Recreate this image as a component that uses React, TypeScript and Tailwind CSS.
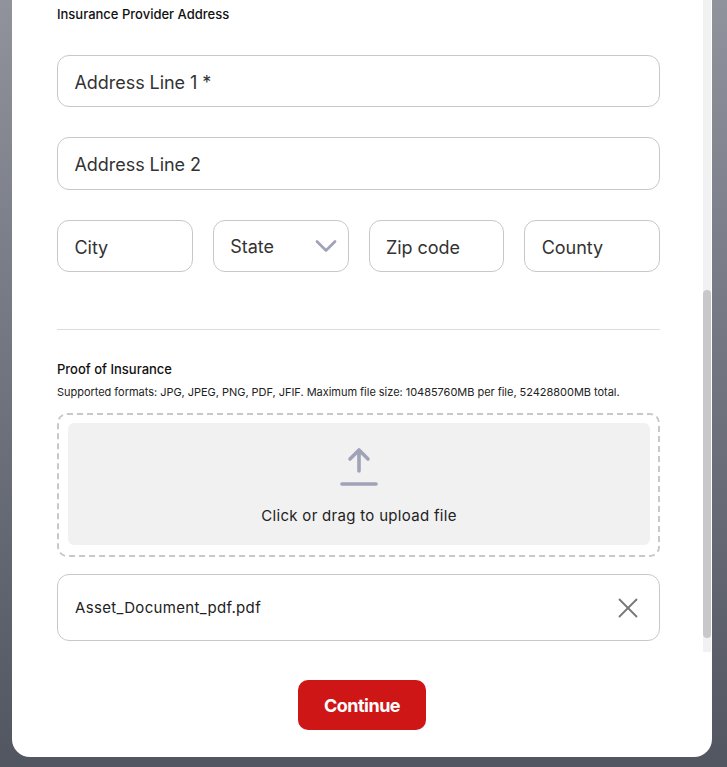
import { ChevronDown, X } from "lucide-react";

function Field({ label, className = "h-[52px] pt-[2px]" }: { label: string; className?: string }) {
  return (
    <div className={`flex items-center rounded-[12px] border border-[#c8c8c8] bg-white pl-[16.5px] pr-4 text-[18px] tracking-[-0.05px] text-[#333] ${className}`}>
      {label}
    </div>
  );
}

export default function App() {
  return (
    <div className="h-[767px] w-full overflow-hidden bg-gradient-to-b from-[#90939c] to-[#525661] pb-[10px] pl-[12px] font-['Inter',sans-serif]">
      <div className="relative h-[757px] w-[700px] overflow-hidden rounded-b-[18px] bg-white pl-[45px] pr-[52px] pt-[6px]">
        {/* scrollbar */}
        <div className="absolute right-[1px] top-0 h-[652px] w-[8px] bg-[#f1f1f1]">
          <div className="mt-[290px] h-[348px] w-full rounded-[4px] bg-[#c8c8c8]" />
        </div>

        <h2 className="text-[13px] font-medium leading-[16px] text-[#111]">Insurance Provider Address</h2>

        <div className="mt-[33px] flex flex-col gap-[30px]">
          <Field label="Address Line 1 *" />
          <Field label="Address Line 2" className="h-[53px] pt-[1px]" />
          <div className="grid grid-cols-4 gap-[20px]">
            <Field label="City" />
            <div className="flex h-[52px] items-center justify-between rounded-[12px] border border-[#c8c8c8] bg-white pl-[16.5px] pr-[4px] text-[18px] tracking-[-0.05px] text-[#333]">
              <span>State</span>
              <ChevronDown className="h-[36px] w-[36px] text-[#a0a3b8]" strokeWidth={1.8} />
            </div>
            <Field label="Zip code" />
            <Field label="County" />
          </div>
        </div>

        <hr className="mt-[57px] border-[#dcdce2]" />

        <h2 className="mt-[30px] text-[13px] font-medium leading-[18px] text-[#111]">Proof of Insurance</h2>
        <p className="mt-[7px] text-[11px] leading-[14px] tracking-[-0.03px] text-[#222]">
          Supported formats: JPG, JPEG, PNG, PDF, JFIF. Maximum file size: 10485760MB per file, 52428800MB total.
        </p>

        <div className="mt-[14px] h-[144px] rounded-[10px] border-2 border-dashed border-[#c8c8c8] pb-[9px] pl-[9px] pr-[8px] pt-[8px]">
          <div className="flex h-[122px] flex-col items-center rounded-[6px] bg-[#f1f1f1] pt-[24px]">
            <svg width="40" height="40" viewBox="0 0 40 40" fill="none" stroke="#a0a3b8" strokeWidth="3.6" strokeLinecap="round" strokeLinejoin="round">
              <path d="M20 24V3M11 12l9-9 9 9" />
              <path d="M3 37h34" />
            </svg>
            <span className="mt-[19px] text-[15px] leading-[20px] tracking-[0.3px] text-[#222]">Click or drag to upload file</span>
          </div>
        </div>

        <div className="mt-[17px] flex h-[67px] items-center justify-between rounded-[12px] border border-[#c8c8c8] pl-[17px] pr-[14px] text-[15px] tracking-[0.33px] text-[#222]">
          <span className="pt-[2px]">Asset_Document_pdf.pdf</span>
          <X className="h-[34px] w-[34px] text-[#777]" strokeWidth={1.3} />
        </div>

        <button className="ml-[241px] mt-[39px] block h-[50px] w-[128px] rounded-[10px] bg-[#cf1616] text-[18px] font-bold tracking-[-0.5px] text-white">
          Continue
        </button>
      </div>
    </div>
  );
}
